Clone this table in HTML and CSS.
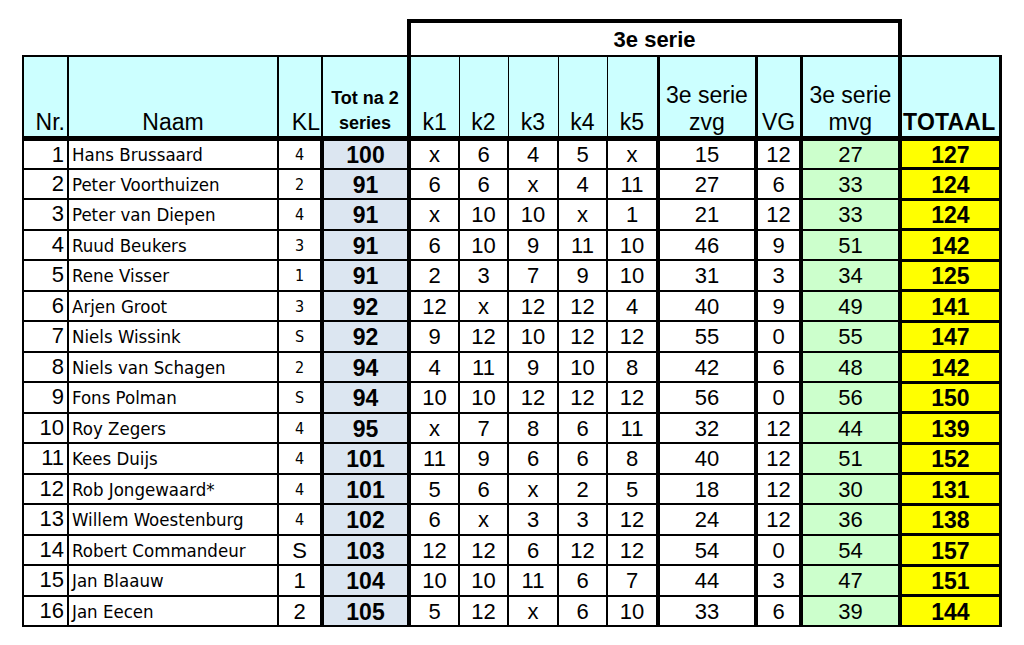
FILE: index.html
```html
<!DOCTYPE html>
<html lang="nl">
<head>
<meta charset="utf-8">
<title>3e serie</title>
<link rel="stylesheet" href="styles.css">
</head>
<body>
<div class="page">
<table class="score">
  <colgroup>
    <col class="w-nr"><col class="w-name"><col class="w-kl"><col class="w-tot">
    <col class="w-k1"><col class="w-k2"><col class="w-k3"><col class="w-k4"><col class="w-k5">
    <col class="w-zvg"><col class="w-vg"><col class="w-mvg"><col class="w-tt">
  </colgroup>
  <thead>
    <tr class="r-box">
      <td class="blank" colspan="4"></td>
      <td class="box" colspan="8">3e serie</td>
      <td class="blank"></td>
    </tr>
    <tr class="r-head">
      <th class="h-nr">Nr.</th>
      <th class="h-name">Naam</th>
      <th class="h-kl">KL</th>
      <th class="h-tot">Tot na 2 series</th>
      <th class="h-k h-k1">k1</th>
      <th class="h-k">k2</th>
      <th class="h-k">k3</th>
      <th class="h-k">k4</th>
      <th class="h-k">k5</th>
      <th class="h-zvg">3e serie zvg</th>
      <th class="h-vg">VG</th>
      <th class="h-mvg">3e serie mvg</th>
      <th class="h-tt">TOTAAL</th>
    </tr>
  </thead>
  <tbody>
    <tr><td class="c-nr">1</td><td class="c-name">Hans Brussaard</td><td class="c-kl sm">4</td><td class="c-tot">100</td><td class="c-k">x</td><td class="c-k">6</td><td class="c-k">4</td><td class="c-k">5</td><td class="c-k">x</td><td class="c-zvg">15</td><td class="c-vg">12</td><td class="c-mvg">27</td><td class="c-tt">127</td></tr>
    <tr><td class="c-nr">2</td><td class="c-name">Peter Voorthuizen</td><td class="c-kl sm">2</td><td class="c-tot">91</td><td class="c-k">6</td><td class="c-k">6</td><td class="c-k">x</td><td class="c-k">4</td><td class="c-k">11</td><td class="c-zvg">27</td><td class="c-vg">6</td><td class="c-mvg">33</td><td class="c-tt">124</td></tr>
    <tr><td class="c-nr">3</td><td class="c-name">Peter van Diepen</td><td class="c-kl sm">4</td><td class="c-tot">91</td><td class="c-k">x</td><td class="c-k">10</td><td class="c-k">10</td><td class="c-k">x</td><td class="c-k">1</td><td class="c-zvg">21</td><td class="c-vg">12</td><td class="c-mvg">33</td><td class="c-tt">124</td></tr>
    <tr><td class="c-nr">4</td><td class="c-name">Ruud Beukers</td><td class="c-kl sm">3</td><td class="c-tot">91</td><td class="c-k">6</td><td class="c-k">10</td><td class="c-k">9</td><td class="c-k">11</td><td class="c-k">10</td><td class="c-zvg">46</td><td class="c-vg">9</td><td class="c-mvg">51</td><td class="c-tt">142</td></tr>
    <tr><td class="c-nr">5</td><td class="c-name">Rene Visser</td><td class="c-kl sm">1</td><td class="c-tot">91</td><td class="c-k">2</td><td class="c-k">3</td><td class="c-k">7</td><td class="c-k">9</td><td class="c-k">10</td><td class="c-zvg">31</td><td class="c-vg">3</td><td class="c-mvg">34</td><td class="c-tt">125</td></tr>
    <tr><td class="c-nr">6</td><td class="c-name">Arjen Groot</td><td class="c-kl sm">3</td><td class="c-tot">92</td><td class="c-k">12</td><td class="c-k">x</td><td class="c-k">12</td><td class="c-k">12</td><td class="c-k">4</td><td class="c-zvg">40</td><td class="c-vg">9</td><td class="c-mvg">49</td><td class="c-tt">141</td></tr>
    <tr><td class="c-nr">7</td><td class="c-name">Niels Wissink</td><td class="c-kl sm">S</td><td class="c-tot">92</td><td class="c-k">9</td><td class="c-k">12</td><td class="c-k">10</td><td class="c-k">12</td><td class="c-k">12</td><td class="c-zvg">55</td><td class="c-vg">0</td><td class="c-mvg">55</td><td class="c-tt">147</td></tr>
    <tr><td class="c-nr">8</td><td class="c-name">Niels van Schagen</td><td class="c-kl sm">2</td><td class="c-tot">94</td><td class="c-k">4</td><td class="c-k">11</td><td class="c-k">9</td><td class="c-k">10</td><td class="c-k">8</td><td class="c-zvg">42</td><td class="c-vg">6</td><td class="c-mvg">48</td><td class="c-tt">142</td></tr>
    <tr><td class="c-nr">9</td><td class="c-name">Fons Polman</td><td class="c-kl sm">S</td><td class="c-tot">94</td><td class="c-k">10</td><td class="c-k">10</td><td class="c-k">12</td><td class="c-k">12</td><td class="c-k">12</td><td class="c-zvg">56</td><td class="c-vg">0</td><td class="c-mvg">56</td><td class="c-tt">150</td></tr>
    <tr><td class="c-nr">10</td><td class="c-name">Roy Zegers</td><td class="c-kl sm">4</td><td class="c-tot">95</td><td class="c-k">x</td><td class="c-k">7</td><td class="c-k">8</td><td class="c-k">6</td><td class="c-k">11</td><td class="c-zvg">32</td><td class="c-vg">12</td><td class="c-mvg">44</td><td class="c-tt">139</td></tr>
    <tr><td class="c-nr">11</td><td class="c-name">Kees Duijs</td><td class="c-kl sm">4</td><td class="c-tot">101</td><td class="c-k">11</td><td class="c-k">9</td><td class="c-k">6</td><td class="c-k">6</td><td class="c-k">8</td><td class="c-zvg">40</td><td class="c-vg">12</td><td class="c-mvg">51</td><td class="c-tt">152</td></tr>
    <tr><td class="c-nr">12</td><td class="c-name">Rob Jongewaard*</td><td class="c-kl sm">4</td><td class="c-tot">101</td><td class="c-k">5</td><td class="c-k">6</td><td class="c-k">x</td><td class="c-k">2</td><td class="c-k">5</td><td class="c-zvg">18</td><td class="c-vg">12</td><td class="c-mvg">30</td><td class="c-tt">131</td></tr>
    <tr><td class="c-nr">13</td><td class="c-name">Willem Woestenburg</td><td class="c-kl sm">4</td><td class="c-tot">102</td><td class="c-k">6</td><td class="c-k">x</td><td class="c-k">3</td><td class="c-k">3</td><td class="c-k">12</td><td class="c-zvg">24</td><td class="c-vg">12</td><td class="c-mvg">36</td><td class="c-tt">138</td></tr>
    <tr><td class="c-nr">14</td><td class="c-name">Robert Commandeur</td><td class="c-kl">S</td><td class="c-tot">103</td><td class="c-k">12</td><td class="c-k">12</td><td class="c-k">6</td><td class="c-k">12</td><td class="c-k">12</td><td class="c-zvg">54</td><td class="c-vg">0</td><td class="c-mvg">54</td><td class="c-tt">157</td></tr>
    <tr><td class="c-nr">15</td><td class="c-name">Jan Blaauw</td><td class="c-kl">1</td><td class="c-tot">104</td><td class="c-k">10</td><td class="c-k">10</td><td class="c-k">11</td><td class="c-k">6</td><td class="c-k">7</td><td class="c-zvg">44</td><td class="c-vg">3</td><td class="c-mvg">47</td><td class="c-tt">151</td></tr>
    <tr><td class="c-nr">16</td><td class="c-name">Jan Eecen</td><td class="c-kl">2</td><td class="c-tot">105</td><td class="c-k">5</td><td class="c-k">12</td><td class="c-k">x</td><td class="c-k">6</td><td class="c-k">10</td><td class="c-zvg">33</td><td class="c-vg">6</td><td class="c-mvg">39</td><td class="c-tt">144</td></tr>
  </tbody>
</table>
</div>
</body>
</html>
```

FILE: styles.css
```css
html, body {
  margin: 0;
  padding: 0;
  background: #ffffff;
}

.page {
  padding: 19px 0 0 22px;
}

.score {
  border-collapse: collapse;
  table-layout: fixed;
  width: 979px;
  font-family: "Liberation Sans", Arial, sans-serif;
  color: #000;
}

.w-nr { width: 45px; }
.w-name { width: 210px; }
.w-kl { width: 44px; }
.w-tot { width: 87px; }
.w-k1 { width: 50px; }
.w-k2 { width: 49px; }
.w-k3 { width: 50px; }
.w-k4 { width: 49px; }
.w-k5 { width: 51px; }
.w-zvg { width: 98px; }
.w-vg { width: 45px; }
.w-mvg { width: 99px; }
.w-tt { width: 100px; }

/* top "3e serie" box */
.r-box { height: 35px; }
.blank { border: none; padding: 0; }
.box {
  border: 4px solid #000;
  border-bottom: 2px solid #000;
  text-align: center;
  font-weight: bold;
  font-size: 22px;
  padding: 2px 0 0 0;
  background: #fff;
}

/* header row */
.r-head { height: 82px; }
.r-head th {
  background: #ccffff;
  border: 1px solid #000;
  border-top: 2px solid #000;
  border-bottom: 5px solid #000;
  font-weight: normal;
  font-size: 23px;
  line-height: 27px;
  vertical-align: bottom;
  padding: 0;
  text-align: center;
  white-space: normal;
}
.r-head .h-nr { border-left: 2px solid #000; border-right: 2px solid #000; text-align: right; padding-right: 2px; }
.r-head .h-name { border-right: 2px solid #000; }
.r-head .h-kl { border-right: 2px solid #000; text-align: right; padding-right: 1px; }
.r-head .h-tot {
  font-weight: bold;
  font-size: 18px;
  line-height: 25px;
  border-right: 4px solid #000;
  padding-bottom: 0;
}
.r-head .h-zvg { border-left: 3px solid #000; border-right: 3px solid #000; }
.r-head .h-mvg { border-left: 3px solid #000; }
.r-head .h-tt {
  border-left: 4px solid #000;
  border-right: 3px solid #000;
  font-weight: bold;
  font-size: 23px;
  letter-spacing: 0.2px;
  white-space: nowrap;
  text-align: left;
  padding-left: 1px;
}

/* body rows */
tbody tr { height: 30.5px; }
tbody td {
  border: 2px solid #000;
  padding: 2px 0 0 0;
  font-size: 22px;
  line-height: 24px;
  text-align: center;
  vertical-align: middle;
  white-space: nowrap;
  overflow: hidden;
}
tbody td.c-nr {
  text-align: right;
  padding-right: 3px;
  vertical-align: top;
  padding-top: 2px;
}
tbody td.c-name {
  text-align: left;
  padding-left: 3px;
  font-family: "DejaVu Sans Condensed", "DejaVu Sans", Tahoma, sans-serif;
  font-size: 18.5px;
}
tbody td.c-kl.sm {
  font-family: "DejaVu Sans Condensed", "DejaVu Sans", Tahoma, sans-serif;
  font-size: 16px;
}
tbody td.c-tot {
  background: #dce6f1;
  font-weight: bold;
  font-size: 23px;
  border-left: 4px solid #000;
  border-right: 4px solid #000;
}
tbody td.c-zvg {
  border-left: 4px solid #000;
  border-right: 4px solid #000;
}
tbody td.c-mvg {
  background: #ccffcc;
  border-left: 4px solid #000;
}
tbody td.c-tt {
  background: #ffff00;
  font-weight: bold;
  font-size: 23px;
  border: 3px solid #000;
  border-left: 4px solid #000;
}
tbody tr:last-child td.c-tt {
  border-bottom: 2px solid #000;
}
```
